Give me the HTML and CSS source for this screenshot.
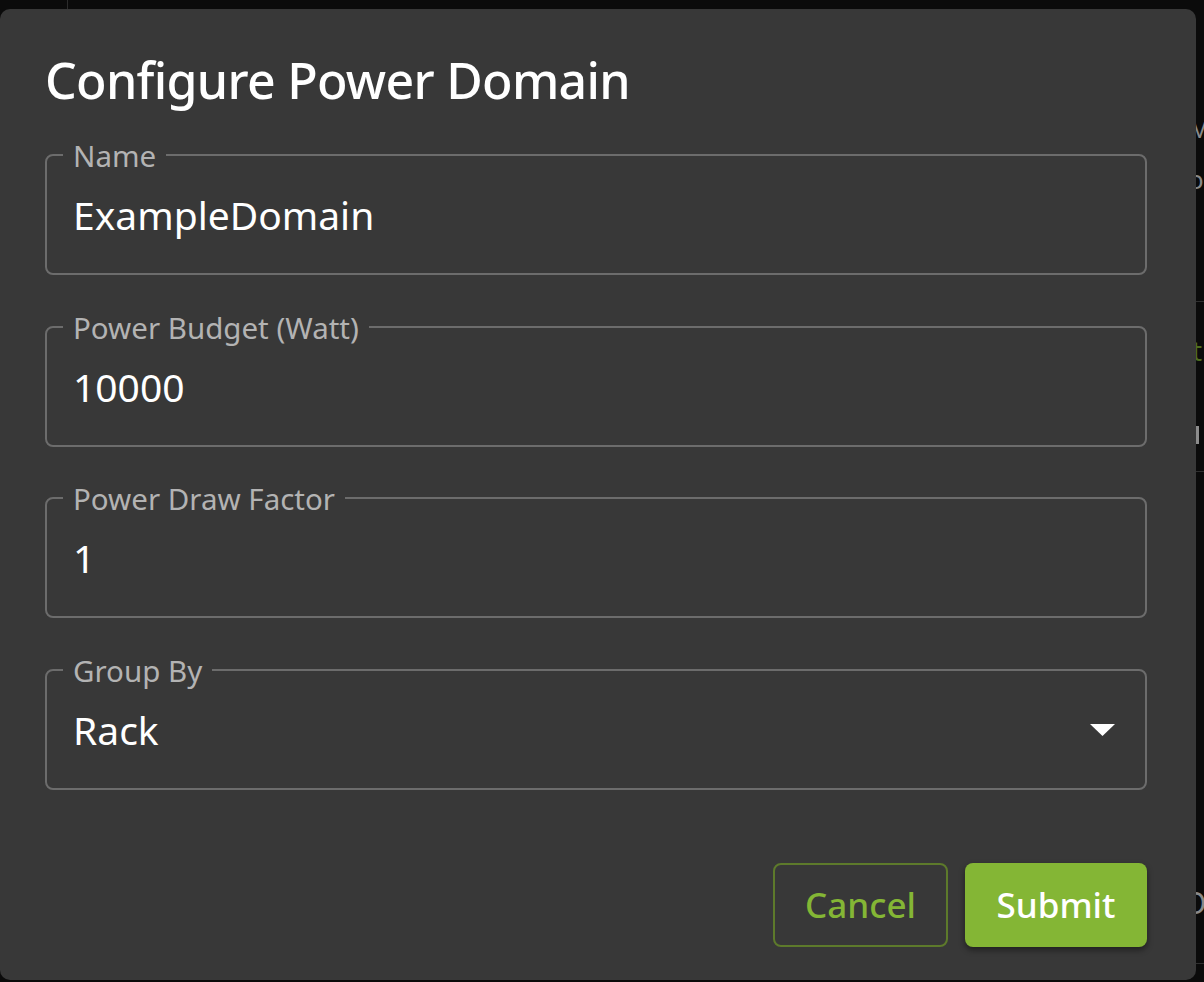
FILE: index.html
```html
<!DOCTYPE html>
<html lang="en">
<head>
<meta charset="utf-8">
<title>Configure Power Domain</title>
<link rel="stylesheet" href="styles.css">
</head>
<body>
<div class="page">
  <div class="behind">
    <span class="bg-vline"></span>
    <span class="bg-frag frag-v">V</span>
    <span class="bg-frag frag-o">o</span>
    <span class="bg-hline line-1"></span>
    <span class="bg-frag frag-t">t</span>
    <span class="bg-bar"></span>
    <span class="bg-hline line-2"></span>
    <span class="bg-frag frag-d">O</span>
    <span class="bg-hline line-3"></span>
  </div>

  <div class="dialog" role="dialog" aria-labelledby="dlg-title">
    <h2 class="title" id="dlg-title">Configure Power Domain</h2>

    <div class="fields">
      <div class="field">
        <span class="label">Name</span>
        <span class="value">ExampleDomain</span>
      </div>
      <div class="field">
        <span class="label">Power Budget (Watt)</span>
        <span class="value">10000</span>
      </div>
      <div class="field">
        <span class="label">Power Draw Factor</span>
        <span class="value">1</span>
      </div>
      <div class="field field-select">
        <span class="label">Group By</span>
        <span class="value">Rack</span>
        <svg class="caret" width="25" height="12" viewBox="0 0 25 12" aria-hidden="true">
          <path d="M0 0 H25 L12.5 12 Z" fill="#ffffff"/>
        </svg>
      </div>
    </div>

    <div class="actions">
      <button class="btn btn-cancel" type="button">Cancel</button>
      <button class="btn btn-submit" type="button">Submit</button>
    </div>
  </div>
</div>
</body>
</html>
```

FILE: styles.css
```css
html, body {
  margin: 0;
  padding: 0;
}

body {
  background: #0b0b0b;
  font-family: "Noto Sans", "Inter", "Liberation Sans", sans-serif;
  color: #ffffff;
  overflow: hidden;
}

.page {
  position: relative;
  height: 982px;
  padding-top: 9px;
  box-sizing: border-box;
}

/* fragments of the page underneath the modal */
.behind {
  position: absolute;
  inset: 0;
  z-index: 0;
}

.bg-vline {
  position: absolute;
  left: 67px;
  top: 0;
  width: 1px;
  height: 9px;
  background: #2c2c2c;
}

.bg-frag {
  position: absolute;
  line-height: 1;
  color: #8a8a8a;
  font-size: 22px;
}

.frag-v { left: 1193px; top: 118px; }
.frag-o { left: 1188px; top: 166px; font-size: 26px; }
.frag-t { left: 1192px; top: 336px; font-size: 28px; color: #4f6e1f; }
.frag-d { left: 1183px; top: 888px; font-size: 30px; }

.bg-hline {
  position: absolute;
  left: 1196px;
  right: 0;
  height: 1px;
  background: #303030;
}

.line-1 { top: 301px; }
.line-2 { top: 471px; }
.line-3 { top: 963px; }

.bg-bar {
  position: absolute;
  left: 1196px;
  top: 426px;
  width: 3px;
  height: 18px;
  background: #8c8c8c;
}

/* dialog */
.dialog {
  position: relative;
  z-index: 1;
  width: 1196px;
  height: 971px;
  box-sizing: border-box;
  background: #383838;
  border-radius: 10px;
  padding: 44px 49px 0 45px;
  display: flex;
  flex-direction: column;
}

.title {
  margin: 0;
  font-size: 50px;
  line-height: 1;
  font-weight: 500;
  color: #ffffff;
  letter-spacing: -0.7px;
  padding-top: 2px;
}

.fields {
  margin-top: 49px;
  display: flex;
  flex-direction: column;
  gap: 50.67px;
}

.field {
  position: relative;
  height: 121px;
  box-sizing: border-box;
  border: 2px solid #6c6c6c;
  border-radius: 8px;
  padding: 0 30px 0 26px;
  display: flex;
  align-items: center;
}

.label {
  position: absolute;
  left: 16px;
  top: -15px;
  padding: 0 10px;
  background: #383838;
  font-size: 29.5px;
  line-height: 1;
  color: #b3b3b3;
}

.value {
  font-size: 39px;
  line-height: 1;
  color: #ffffff;
}

.field-select {
  justify-content: space-between;
}

.caret {
  display: block;
  margin-top: 2px;
}

.actions {
  margin-top: 73px;
  display: flex;
  justify-content: flex-end;
  gap: 17px;
}

.btn {
  height: 84px;
  box-sizing: border-box;
  border-radius: 8px;
  font-family: inherit;
  font-size: 35px;
  line-height: 1;
  font-weight: 500;
  padding: 0;
  cursor: pointer;
}

.btn-cancel {
  width: 175px;
  background: transparent;
  border: 2px solid #5d7a2b;
  color: #84b635;
}

.btn-submit {
  width: 182px;
  background: #84b635;
  border: none;
  color: #ffffff;
  box-shadow: 0 3px 6px rgba(0, 0, 0, 0.45);
}
```
